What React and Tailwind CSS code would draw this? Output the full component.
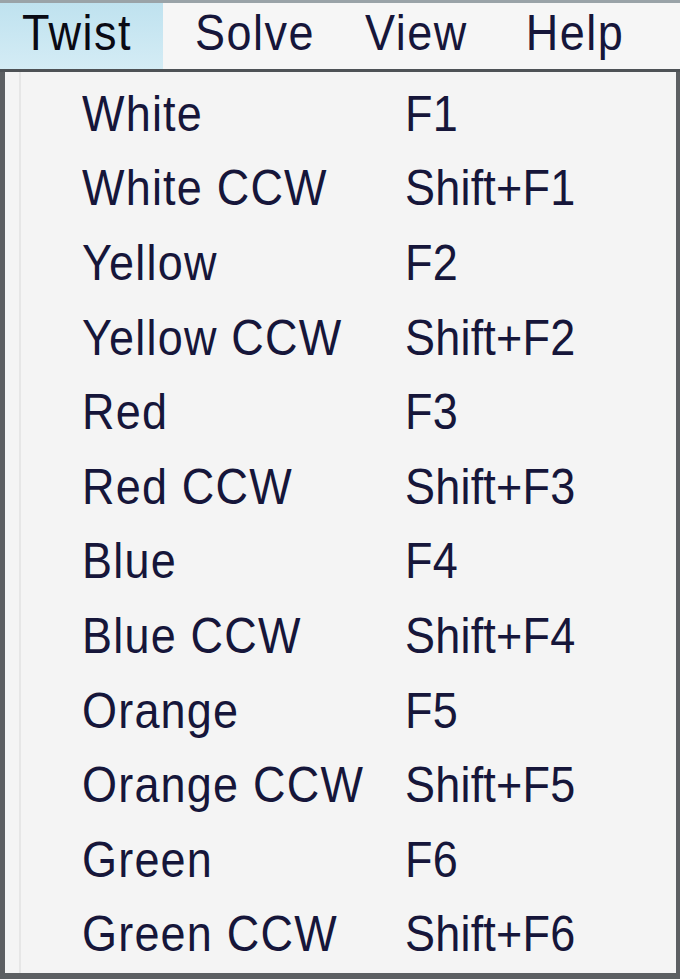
const menus = ['Twist', 'Solve', 'View', 'Help']

const items = [
  ['White', 'F1'],
  ['White CCW', 'Shift+F1'],
  ['Yellow', 'F2'],
  ['Yellow CCW', 'Shift+F2'],
  ['Red', 'F3'],
  ['Red CCW', 'Shift+F3'],
  ['Blue', 'F4'],
  ['Blue CCW', 'Shift+F4'],
  ['Orange', 'F5'],
  ['Orange CCW', 'Shift+F5'],
  ['Green', 'F6'],
  ['Green CCW', 'Shift+F6'],
]

export default function App() {
  return (
    <div
      className="w-[680px] h-[979px] flex flex-col bg-[#f5f5f5] text-[#16163a] overflow-hidden"
      style={{ fontFamily: '"Liberation Sans", Arial, sans-serif' }}
    >
      {/* Menu bar */}
      <div className="h-[72px] shrink-0 flex items-stretch border-t-[3px] border-b-[3px] border-t-[#9aa3a8] border-b-[#4e5256] bg-[#f6f6f6]">
        {menus.map((m, i) => (
          <div
            key={m}
            className={
              i === 0
                ? 'w-[163px] flex items-center pl-[22px] pb-[6px] text-[45px] tracking-[1.5px] bg-gradient-to-b from-[#bfe2ef] to-[#d4ecf5] text-[#0a0a14]'
                : 'flex items-center pb-[6px] text-[45px] tracking-[1.5px] ' +
                  (i === 1 ? 'pl-[32px] pr-[50px]' : i === 2 ? 'pr-[58px]' : '')
            }
          >
            <span className="inline-block scale-y-[1.12]">{m}</span>
          </div>
        ))}
      </div>

      {/* Dropdown */}
      <div className="flex-1 flex border-l-[5px] border-r-[4px] border-b-[6px] border-[#5c5f62] bg-[#f4f4f4]">
        <div className="w-[16px] shrink-0 border-r-2 border-[#e6e6e6]" />
        <div className="flex-1 flex flex-col pt-[4px]">
          {items.map(([label, key]) => (
            <div key={label} className="h-[74.6px] flex items-center text-[45px] leading-none whitespace-nowrap">
              <span className="w-[384px] shrink-0 pl-[61px]">
                <span className="inline-block scale-y-[1.12] tracking-[1.2px]">{label}</span>
              </span>
              <span className="inline-block scale-y-[1.12] tracking-[0.2px]">{key}</span>
            </div>
          ))}
        </div>
      </div>
    </div>
  )
}
